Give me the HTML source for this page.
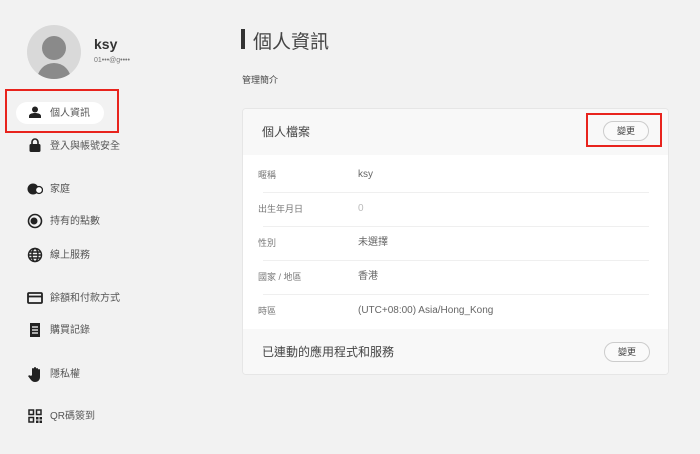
<!DOCTYPE html>
<html><head><meta charset="utf-8"><style>
body{margin:0;width:700px;height:454px;background:#f2f2f2;font-family:"Liberation Sans","Noto Sans CJK TC",sans-serif;position:relative;overflow:hidden;color:#333}
.a{position:absolute}
.nav{position:absolute;left:50px;font-size:10px;color:#555;line-height:12px}
.ic{position:absolute;left:27px;width:16px;height:16px}
.lbl{position:absolute;left:258px;font-size:9px;color:#777;line-height:12px}
.val{position:absolute;left:358px;font-size:10px;color:#666;line-height:12px}
.hr{position:absolute;left:263px;width:386px;height:1px;background:#efefef}
.btn{position:absolute;width:44px;height:18px;border:1px solid #ccc;border-radius:10px;background:#fafafa;font-size:9px;text-align:center;line-height:18px;color:#444}
</style></head><body>
<div class="a" style="left:27px;top:25px;width:54px;height:54px;border-radius:50%;background:#d9d9d9;overflow:hidden">
<div class="a" style="left:15px;top:11px;width:24px;height:24px;border-radius:50%;background:#8a8a8a"></div>
<div class="a" style="left:10px;top:38px;width:34px;height:24px;border-radius:17px 17px 0 0;background:#8a8a8a"></div></div>
<div class="a" style="left:94px;top:36px;font-size:14px;font-weight:bold;color:#333">ksy</div>
<div class="a" style="left:94px;top:57px;font-size:7px;color:#777">01•••@g••••</div>
<div class="a" style="left:5px;top:89px;width:114px;height:44px;border:2px solid #e8231d;box-sizing:border-box"></div>
<div class="a" style="left:16px;top:102px;width:88px;height:22px;border-radius:11px;background:#fff"></div>
<svg class="ic" style="top:106px;left:29px;width:12px;height:12px" viewBox="0 0 12 12"><circle cx="6" cy="3.5" r="3" fill="#222"/><path d="M0 12v-2c0-2 3-3 6-3s6 1 6 3v2z" fill="#222"/></svg>
<div class="nav" style="top:108px">個人資訊</div>
<svg class="ic" style="top:138px;left:29px;width:12px;height:14px" viewBox="0 0 12 14"><path d="M3 6V4a3 3 0 0 1 6 0v2" stroke="#222" stroke-width="1.6" fill="none"/><rect x="0.5" y="6" width="11" height="8" rx="1.5" fill="#222"/></svg>
<div class="nav" style="top:141px">登入與帳號安全</div>
<svg class="ic" style="top:181px" viewBox="0 0 16 16"><circle cx="6" cy="8" r="5.5" fill="#222"/><circle cx="12" cy="9" r="3.5" fill="#fff" stroke="#222" stroke-width="1.3"/></svg>
<div class="nav" style="top:184px">家庭</div>
<svg class="ic" style="top:213px" viewBox="0 0 16 16"><circle cx="8" cy="8" r="6.5" fill="none" stroke="#222" stroke-width="1.6"/><circle cx="7" cy="8" r="3.5" fill="#222"/></svg>
<div class="nav" style="top:216px">持有的點數</div>
<svg class="ic" style="top:247px" viewBox="0 0 16 16"><g fill="none" stroke="#222" stroke-width="1.4"><circle cx="8" cy="8" r="6.5"/><ellipse cx="8" cy="8" rx="3" ry="6.5"/><path d="M1.5 8h13M2.5 5h11M2.5 11h11"/></g></svg>
<div class="nav" style="top:250px">線上服務</div>
<svg class="ic" style="top:290px" viewBox="0 0 16 16"><rect x="1" y="3" width="14" height="10" rx="1" fill="none" stroke="#222" stroke-width="1.8"/><path d="M1 6.5h14" stroke="#222" stroke-width="1.8"/></svg>
<div class="nav" style="top:293px">餘額和付款方式</div>
<svg class="ic" style="top:322px" viewBox="0 0 16 16"><rect x="3" y="1" width="10" height="14" fill="#222"/><path d="M5 5h6M5 8h6M5 11h6" stroke="#fff" stroke-width="1.2"/></svg>
<div class="nav" style="top:325px">購買記錄</div>
<svg class="ic" style="top:366px" viewBox="0 0 16 16"><path d="M5 9V3a1 1 0 0 1 2 0V2a1 1 0 0 1 2 0v1a1 1 0 0 1 2 0v1a1 1 0 0 1 2 0v7c0 3-2 5-5 5-2 0-3-1-4-2L1 10c1-1 2-1 3 0z" fill="#222"/></svg>
<div class="nav" style="top:369px">隱私權</div>
<svg class="ic" style="top:409px;left:28px;width:14px;height:14px" viewBox="0 0 14 14"><g fill="none" stroke="#222" stroke-width="1.5"><rect x="1" y="1" width="4.5" height="4.5"/><rect x="8.5" y="1" width="4.5" height="4.5"/><rect x="1" y="8.5" width="4.5" height="4.5"/></g><rect x="8" y="8" width="2.5" height="2.5" fill="#222"/><rect x="11.5" y="8" width="2.5" height="2.5" fill="#222"/><rect x="8" y="11.5" width="2.5" height="2.5" fill="#222"/><rect x="11.5" y="11.5" width="2.5" height="2.5" fill="#222"/></svg>
<div class="nav" style="top:411px">QR碼簽到</div>

<div class="a" style="left:241px;top:29px;width:4px;height:20px;background:#333"></div>
<div class="a" style="left:253px;top:27px;font-size:19px;color:#444">個人資訊</div>
<div class="a" style="left:242px;top:73px;font-size:9px;color:#444">管理簡介</div>

<div class="a" style="left:242px;top:108px;width:427px;height:267px;background:#fff;border:1px solid #e6e6e6;border-radius:4px;box-sizing:border-box;overflow:hidden">
<div class="a" style="left:0;top:0;width:427px;height:46px;background:#f8f8f8"></div>
<div class="a" style="left:0;top:220px;width:427px;height:47px;background:#f8f8f8"></div>
</div>
<div class="a" style="left:262px;top:123px;font-size:12px;color:#444">個人檔案</div>
<div class="a" style="left:586px;top:113px;width:76px;height:34px;border:2px solid #e8231d;box-sizing:border-box"></div>
<div class="btn" style="left:603px;top:121px">變更</div>
<div class="lbl" style="top:169px">暱稱</div><div class="val" style="top:169px">ksy</div>
<div class="hr" style="top:192px"></div>
<div class="lbl" style="top:203px">出生年月日</div><div class="val" style="top:203px;color:#bbb">0</div>
<div class="hr" style="top:226px"></div>
<div class="lbl" style="top:237px">性別</div><div class="val" style="top:237px">未選擇</div>
<div class="hr" style="top:260px"></div>
<div class="lbl" style="top:271px">國家 / 地區</div><div class="val" style="top:271px">香港</div>
<div class="hr" style="top:294px"></div>
<div class="lbl" style="top:305px">時區</div><div class="val" style="top:305px">(UTC+08:00) Asia/Hong_Kong</div>
<div class="a" style="left:262px;top:343px;font-size:12px;color:#444">已連動的應用程式和服務</div>
<div class="btn" style="left:604px;top:342px">變更</div>
</body></html>
